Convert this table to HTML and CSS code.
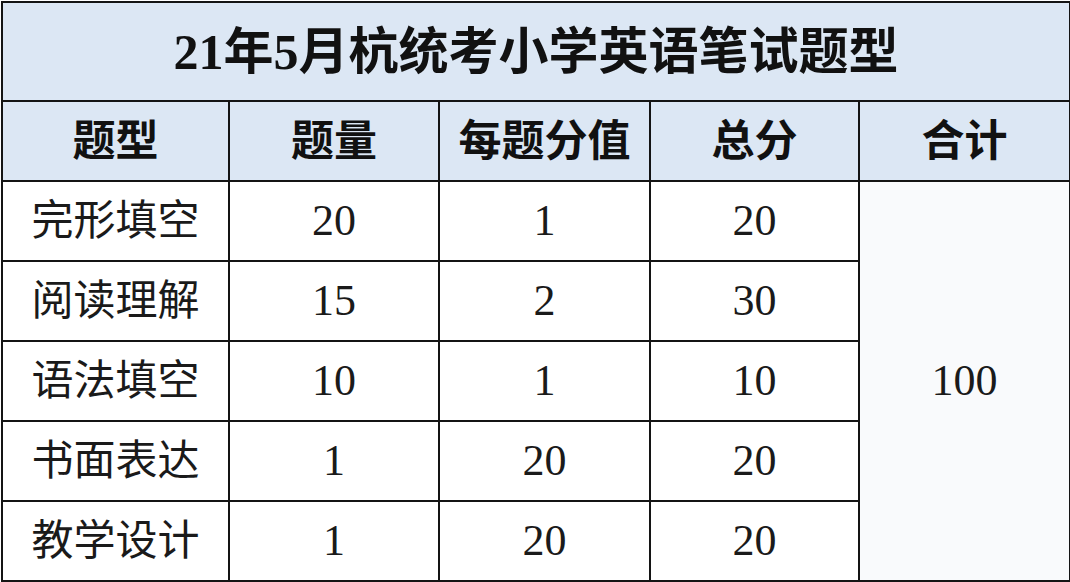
FILE: index.html
```html
<!DOCTYPE html>
<html lang="zh-CN">
<head>
<meta charset="utf-8">
<title>21年5月杭统考小学英语笔试题型</title>
<link rel="stylesheet" href="styles.css">
</head>
<body>
<table class="exam">
  <colgroup>
    <col class="c1"><col class="c2"><col class="c3"><col class="c4"><col class="c5">
  </colgroup>
  <tr class="title-row"><td class="title" colspan="5">21年5月杭统考小学英语笔试题型</td></tr>
  <tr class="head-row">
    <td class="head">题型</td>
    <td class="head">题量</td>
    <td class="head">每题分值</td>
    <td class="head">总分</td>
    <td class="head">合计</td>
  </tr>
  <tr class="row">
    <td class="name">完形填空</td><td class="num">20</td><td class="num">1</td><td class="num">20</td>
    <td class="num total" rowspan="5">100</td>
  </tr>
  <tr class="row">
    <td class="name">阅读理解</td><td class="num">15</td><td class="num">2</td><td class="num">30</td>
  </tr>
  <tr class="row">
    <td class="name">语法填空</td><td class="num">10</td><td class="num">1</td><td class="num">10</td>
  </tr>
  <tr class="row">
    <td class="name">书面表达</td><td class="num">1</td><td class="num">20</td><td class="num">20</td>
  </tr>
  <tr class="row">
    <td class="name">教学设计</td><td class="num">1</td><td class="num">20</td><td class="num">20</td>
  </tr>
</table>
</body>
</html>
```

FILE: styles.css
```css
html, body {
  margin: 0;
  padding: 0;
  background: #ffffff;
}

.exam {
  width: 1068px;
  height: 580px;
  margin: 1px;
  border-collapse: collapse;
  table-layout: fixed;
  font-family: "Liberation Serif", "Noto Sans CJK SC", serif;
  color: #111111;
}

.c1 { width: 227px; }
.c2 { width: 210px; }
.c3 { width: 211px; }
.c4 { width: 209px; }
.c5 { width: 211px; }

.exam td {
  border: 2px solid #141414;
  padding: 0;
  text-align: center;
  vertical-align: middle;
  line-height: 1;
}

.title-row { height: 99px; }
.head-row { height: 80px; }
.row { height: 80px; }

.title {
  background: #dce7f4;
  font-size: 50px;
  font-weight: 700;
  padding-top: 8px;
}

.head {
  background: #dce7f4;
  font-size: 43px;
  font-weight: 700;
  padding-top: 5px;
}

.name {
  font-size: 42px;
  font-weight: 400;
  color: #1a1a1a;
  padding-top: 7px;
}

.num {
  font-size: 44px;
  font-weight: 400;
  color: #1a1a1a;
  padding-top: 8px;
}

.total {
  background: #f9fafc;
}
```
